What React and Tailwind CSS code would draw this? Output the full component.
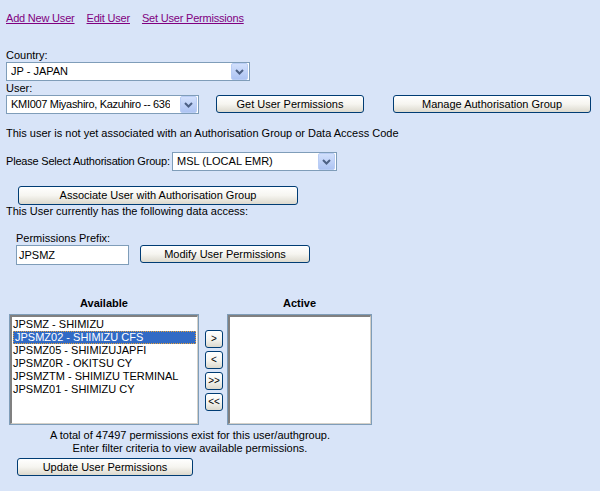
import React from 'react';

const Chevron = () => (
  <span className="flex h-[17px] w-[17px] shrink-0 items-center justify-center rounded-[2px] border border-[#b9cdf5] bg-gradient-to-b from-[#d2e0fc] to-[#aec4f3]">
    <svg width="9" height="6" viewBox="0 0 9 6">
      <path d="M1 1 L4.5 4.5 L8 1" fill="none" stroke="#4d6185" strokeWidth="2" />
    </svg>
  </span>
);

const Select = ({ value, className, textClass = '' }) => (
  <div className={`flex h-[19px] items-center justify-between border border-[#7f9db9] bg-white pl-[4px] pr-[1px] ${className}`}>
    <span className={`overflow-hidden whitespace-nowrap leading-none ${textClass}`}>{value}</span>
    <Chevron />
  </div>
);

const XpButton = ({ children, className }) => (
  <button className={`flex h-[18px] items-center justify-center rounded-[3px] border border-[#003c74] bg-gradient-to-b from-[#ffffff] via-[#f6f5f0] to-[#dcd9ce] leading-none text-black ${className}`}>
    {children}
  </button>
);

const items = [
  'JPSMZ - SHIMIZU',
  'JPSMZ02 - SHIMIZU CFS',
  'JPSMZ05 - SHIMIZUJAPFI',
  'JPSMZ0R - OKITSU CY',
  'JPSMZTM - SHIMIZU TERMINAL',
  'JPSMZ01 - SHIMIZU CY',
];

const ListBox = ({ children, className }) => (
  <div className={`h-[111px] border border-[#7f9db9] bg-white ${className}`}>
    <div className="h-full border-l-2 border-t-2 border-l-[#808080] border-t-[#808080] border-b border-r border-b-[#d4d0c8] border-r-[#d4d0c8] pt-[1px]">
      {children}
    </div>
  </div>
);

export default function App() {
  return (
    <div className="h-[491px] w-[600px] bg-[#d8e4f8] pl-[6px] pt-[11px] font-['Liberation_Sans',sans-serif] text-[11px] text-black">
      <div className="flex h-[14px] items-center gap-[12px] leading-none tracking-[-0.2px]">
        <a href="#" className="text-[#800080] underline">Add New User</a>
        <a href="#" className="text-[#800080] underline">Edit User</a>
        <a href="#" className="text-[#800080] underline">Set User Permissions</a>
      </div>

      <div className="mt-[24px] flex h-[13px] items-center leading-none">Country:</div>
      <Select value="JP - JAPAN" className="w-[244px]" />

      <div className="flex h-[14px] items-center leading-none">User:</div>
      <div className="flex items-start">
        <Select value="KMI007 Miyashiro, Kazuhiro -- 636" className="w-[193px]" textClass="tracking-[-0.3px]" />
        <XpButton className="ml-[17px] w-[148px]">Get User Permissions</XpButton>
        <XpButton className="ml-[29px] w-[198px]">Manage Authorisation Group</XpButton>
      </div>

      <div className="mt-[13px] flex h-[13px] items-center leading-none">
        This user is not yet associated with an Authorisation Group or Data Access Code
      </div>

      <div className="mt-[12px] flex items-center">
        <span className="w-[163px] whitespace-nowrap leading-none tracking-[-0.2px]">Please Select Authorisation Group:</span>
        <Select value="MSL (LOCAL EMR)" className="ml-[3px] w-[165px]" />
      </div>

      <XpButton className="ml-[12px] mt-[15px] h-[19px] w-[280px]">Associate User with Authorisation Group</XpButton>
      <div className="flex h-[13px] items-center leading-none">This User currently has the following data access:</div>

      <div className="ml-[10px] mt-[14px] flex h-[13px] items-center leading-none">Permissions Prefix:</div>
      <div className="ml-[10px] flex items-start">
        <div className="flex h-[20px] w-[113px] items-center border border-[#7f9db9] bg-white pl-[2px] leading-none">JPSMZ</div>
        <XpButton className="ml-[11px] w-[170px]">Modify User Permissions</XpButton>
      </div>

      <div className="ml-[3px] mt-[32px] flex">
        <div className="w-[190px]">
          <div className="flex h-[13px] items-center justify-center font-bold leading-none">Available</div>
          <ListBox className="mt-[4px]">
            {items.map((it, i) => (
              <div
                key={it}
                className={`flex h-[13px] items-center pl-[1px] leading-none ${i === 1 ? 'mx-[1px] border border-dotted border-[#e6a23c] bg-[#316ac5] pl-0 text-white' : ''}`}
              >
                {it}
              </div>
            ))}
          </ListBox>
        </div>
        <div className="ml-[6px] mt-[33px] flex flex-col gap-[3px]">
          {['>', '<', '>>', '<<'].map((s) => (
            <XpButton key={s} className="h-[17px] w-[18px] text-[10px]">{s}</XpButton>
          ))}
        </div>
        <div className="ml-[4px] w-[145px]">
          <div className="flex h-[13px] items-center justify-center font-bold leading-none">Active</div>
          <ListBox className="mt-[4px]" />
        </div>
      </div>

      <div className="mt-[4px] w-[368px] text-center leading-[13px]">
        <div>A total of 47497 permissions exist for this user/authgroup.</div>
        <div>Enter filter criteria to view available permissions.</div>
      </div>
      <XpButton className="ml-[11px] mt-[3px] w-[176px]">Update User Permissions</XpButton>
    </div>
  );
}
